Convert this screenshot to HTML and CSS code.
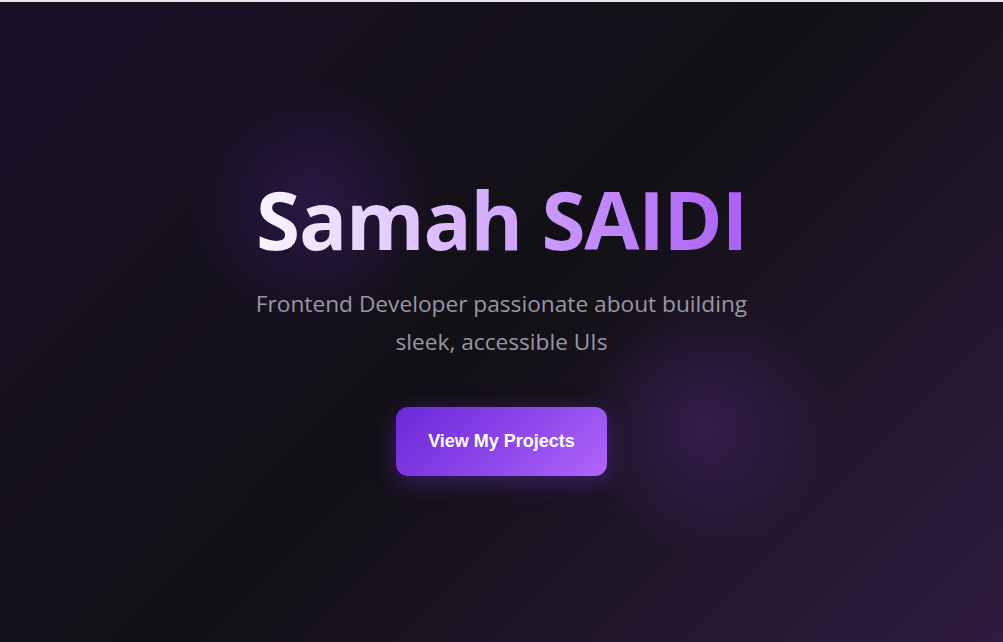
FILE: index.html
```html
<!DOCTYPE html>
<html lang="en">
<head>
<meta charset="utf-8">
<title>Samah SAIDI</title>
<link rel="stylesheet" href="styles.css">
</head>
<body>
<main class="hero">
  <div class="glow glow-one"></div>
  <div class="glow glow-two"></div>
  <div class="hero-content">
    <h1 class="hero-title">Samah SAIDI</h1>
    <p class="hero-subtitle">Frontend Developer passionate about building sleek, accessible UIs</p>
    <a class="hero-button" href="#projects">View My Projects</a>
  </div>
</main>
</body>
</html>
```
FILE: styles.css
```css
* { box-sizing: border-box; }
html, body { margin: 0; padding: 0; }
body {
  background: #e6e6e6;
  padding-top: 2px;
  font-family: "Open Sans", "Noto Sans", sans-serif;
}
.hero {
  position: relative;
  overflow: hidden;
  height: 640px;
  display: flex;
  align-items: flex-start;
  justify-content: center;
  background: linear-gradient(135deg, #1a1128 0%, #121016 50%, #2f1b3e 100%);
}
.glow {
  position: absolute;
  border-radius: 50%;
  pointer-events: none;
}
.glow-one {
  left: 180px; top: 75px;
  width: 270px; height: 260px;
  background: radial-gradient(circle, rgba(60, 28, 100, 0.55) 0%, rgba(60, 28, 100, 0) 65%);
}
.glow-two {
  left: 565px; top: 285px;
  width: 280px; height: 280px;
  background: radial-gradient(circle, rgba(70, 35, 105, 0.55) 0%, rgba(70, 35, 105, 0) 65%);
}
.hero-content {
  position: relative;
  display: flex;
  flex-direction: column;
  align-items: center;
  text-align: center;
  padding-top: 169px;
}
.hero-title {
  margin: 0;
  font-size: 80px;
  font-weight: 700;
  line-height: 1.2;
  letter-spacing: -1.2px;
  background: linear-gradient(90deg, #faf6ff 0%, #e2c8fd 30%, #c590fb 65%, #ac5ff7 100%);
  -webkit-background-clip: text;
  background-clip: text;
  color: transparent;
}
.hero-subtitle {
  margin: 18px 0 0;
  max-width: 510px;
  font-size: 22.7px;
  line-height: 38px;
  color: #9a97a3;
}
.hero-button {
  margin-top: 46px;
  display: inline-block;
  padding: 24px 32px;
  border-radius: 12px;
  background: linear-gradient(135deg, #6d28d9 0%, #8b45e8 50%, #b066fb 100%);
  color: #ffffff;
  text-decoration: none;
  font-family: "Liberation Sans", Arial, sans-serif;
  font-weight: 700;
  font-size: 18px;
  line-height: 21px;
  box-shadow: 0 6px 24px rgba(124, 58, 237, 0.35);
}
```
